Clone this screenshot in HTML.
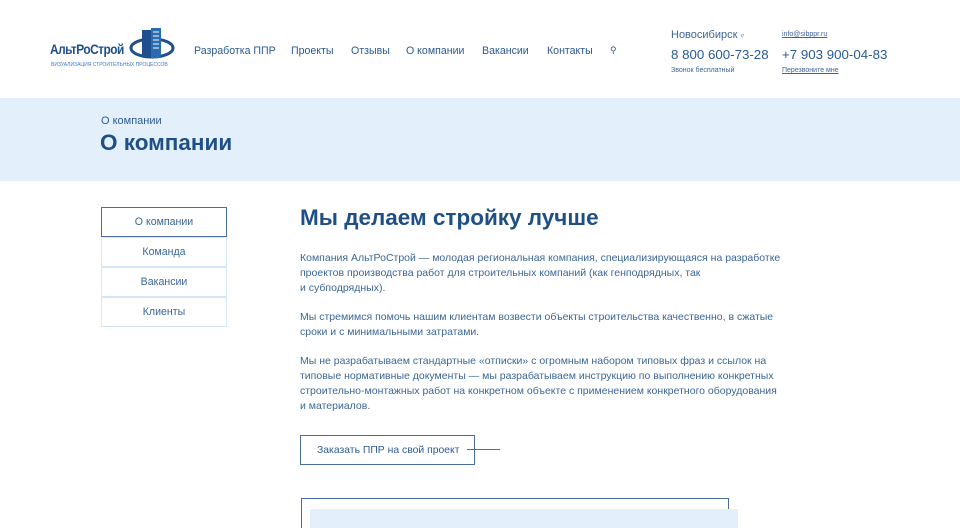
<!DOCTYPE html>
<html><head><meta charset="utf-8"><style>
*{margin:0;padding:0;box-sizing:border-box}
html,body{width:960px;height:528px;overflow:hidden}
body{background:#fff;font-family:"Liberation Sans",sans-serif;color:#2f5b8f;position:relative}
.a{position:absolute;white-space:nowrap}
nav span{position:absolute;top:45px;font-size:10.6px;color:#2a5a92}
.banner{position:absolute;left:0;top:98px;width:960px;height:83px;background:#e3f0fc}
.side{position:absolute;left:101px;width:126px;height:30px;border:1px solid #d5e6f7;font-size:10.6px;text-align:center;line-height:29px;color:#3c6696}
p.t{position:absolute;left:300px;width:486px;font-size:10.5px;line-height:15px;color:#3c6696}
</style></head><body>
<div class="a" style="left:50px;top:41px;font-size:14px;font-weight:bold;color:#1f4f8c;letter-spacing:-0.6px;transform:scaleX(.85);transform-origin:left">АльтРоСтрой</div>
<svg class="a" style="left:128px;top:28px" width="48" height="38" viewBox="0 0 48 38"><ellipse cx="24" cy="20" rx="21" ry="9" fill="none" stroke="#1f4f8c" stroke-width="3"/><rect x="14" y="2" width="9" height="26" fill="#1f4f8c"/><rect x="23" y="0" width="10" height="30" fill="#2b6bb0"/><path d="M25 4h6M25 8h6M25 12h6M25 16h6M25 20h6" stroke="#fff" stroke-width="1"/></svg>
<div class="a" style="left:51px;top:62px;font-size:5px;color:#3e7dc4">ВИЗУАЛИЗАЦИЯ СТРОИТЕЛЬНЫХ ПРОЦЕССОВ</div>
<nav><span style="left:194px">Разработка ППР</span><span style="left:291px">Проекты</span><span style="left:351px">Отзывы</span><span style="left:406px">О компании</span><span style="left:482px">Вакансии</span><span style="left:547px">Контакты</span><span style="left:610px;font-size:9px">⚲</span></nav>
<div class="a" style="left:671px;top:29px;font-size:11px;color:#3c6696">Новосибирск <span style="font-size:7px">▿</span></div>
<div class="a" style="left:782px;top:31px;font-size:7px;text-decoration:underline;color:#3c6696">info@sibppr.ru</div>
<div class="a" style="left:671px;top:47px;font-size:13.3px;color:#2a5a92">8 800 600-73-28</div>
<div class="a" style="left:782px;top:47px;font-size:13.3px;color:#2a5a92">+7 903 900-04-83</div>
<div class="a" style="left:671px;top:67px;font-size:7px;color:#3c6696">Звонок бесплатный</div>
<div class="a" style="left:782px;top:67px;font-size:7px;text-decoration:underline;color:#3c6696">Перезвоните мне</div>
<div class="banner"></div>
<div class="a" style="left:101px;top:115px;font-size:11px;color:#2f5b8f">О компании</div>
<div class="a" style="left:100px;top:130px;font-size:22.5px;font-weight:bold;color:#1e4f86">О компании</div>
<div class="side" style="top:207px;border:1px solid #4a6f9c">О компании</div>
<div class="side" style="top:237px">Команда</div>
<div class="side" style="top:267px">Вакансии</div>
<div class="side" style="top:297px">Клиенты</div>
<div class="a" style="left:300px;top:205px;font-size:22.5px;font-weight:bold;color:#1e4f86">Мы делаем стройку лучше</div>
<p class="t" style="top:251px">Компания АльтРоСтрой — молодая региональная компания, специализирующаяся на разработке проектов производства работ для строительных компаний (как генподрядных, так<br>и&nbsp;субподрядных).</p>
<p class="t" style="top:310px">Мы стремимся помочь нашим клиентам возвести объекты строительства качественно, в сжатые сроки и с минимальными затратами.</p>
<p class="t" style="top:354px">Мы не разрабатываем стандартные «отписки» с огромным набором типовых фраз и ссылок на типовые нормативные документы — мы разрабатываем инструкцию по выполнению конкретных строительно-монтажных работ на конкретном объекте с применением конкретного оборудования<br>и материалов.</p>
<div class="a" style="left:300px;top:435px;width:175px;height:30px;border:1px solid #4a6f9c;font-size:10.4px;line-height:29px;padding-left:16px;color:#2f5b8f">Заказать ППР на свой проект</div>
<div class="a" style="left:467px;top:449px;width:33px;height:1px;background:#4a6f9c"></div>
<div class="a" style="left:301px;top:498px;width:428px;height:40px;border:1px solid #4a6f9c"></div>
<div class="a" style="left:310px;top:509px;width:428px;height:30px;background:#e3f0fc"></div>
</body></html>
